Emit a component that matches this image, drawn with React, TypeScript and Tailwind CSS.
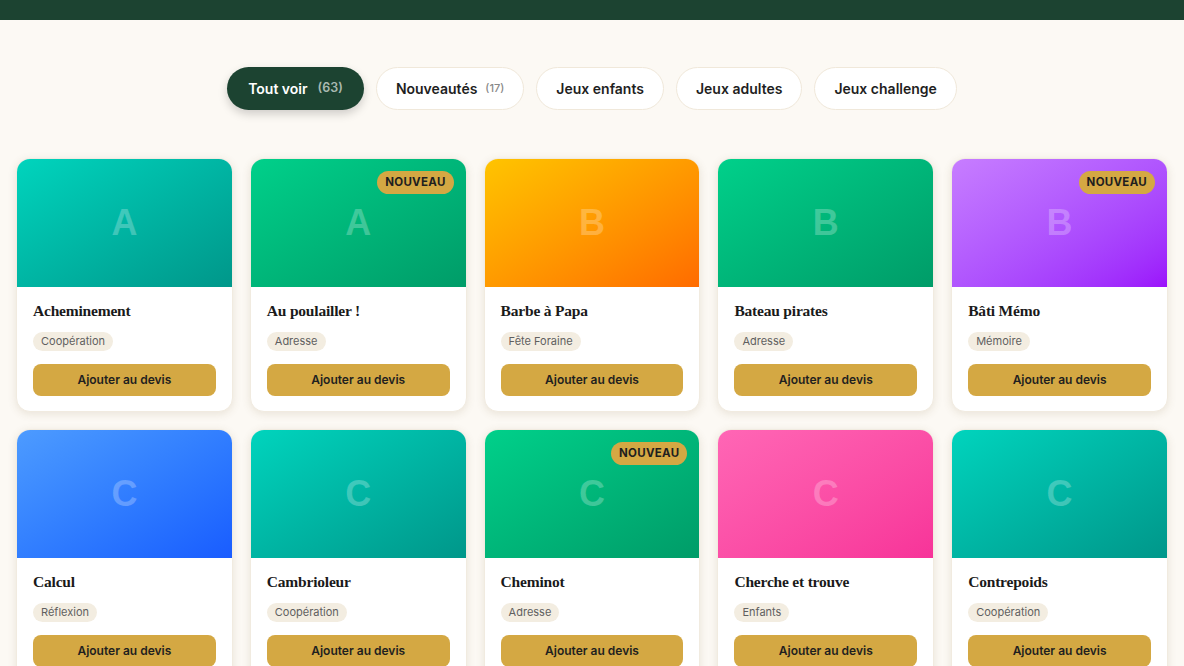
import React from 'react';

type Game = { name: string; tag: string; letter: string; grad: string; isNew?: boolean };

const games: Game[] = [
  { name: 'Acheminement', tag: 'Coopération', letter: 'A', grad: 'bg-gradient-to-br from-[#00d4bd] to-[#00978a]' },
  { name: 'Au poulailler !', tag: 'Adresse', letter: 'A', grad: 'bg-gradient-to-br from-[#00d08a] to-[#009c68]', isNew: true },
  { name: 'Barbe à Papa', tag: 'Fête Foraine', letter: 'B', grad: 'bg-gradient-to-br from-[#ffc400] to-[#ff6b00]' },
  { name: 'Bateau pirates', tag: 'Adresse', letter: 'B', grad: 'bg-gradient-to-br from-[#00d08a] to-[#009c68]' },
  { name: 'Bâti Mémo', tag: 'Mémoire', letter: 'B', grad: 'bg-gradient-to-br from-[#c77dff] to-[#9b10fb]', isNew: true },
  { name: 'Calcul', tag: 'Réflexion', letter: 'C', grad: 'bg-gradient-to-br from-[#4d9bff] to-[#1a5cff]' },
  { name: 'Cambrioleur', tag: 'Coopération', letter: 'C', grad: 'bg-gradient-to-br from-[#00d4bd] to-[#00978a]' },
  { name: 'Cheminot', tag: 'Adresse', letter: 'C', grad: 'bg-gradient-to-br from-[#00d08a] to-[#009c68]', isNew: true },
  { name: 'Cherche et trouve', tag: 'Enfants', letter: 'C', grad: 'bg-gradient-to-br from-[#ff66b5] to-[#f73399]' },
  { name: 'Contrepoids', tag: 'Coopération', letter: 'C', grad: 'bg-gradient-to-br from-[#00d4bd] to-[#00978a]' },
];

const filters = [
  { label: 'Tout voir', count: '63', active: true },
  { label: 'Nouveautés', count: '17' },
  { label: 'Jeux enfants' },
  { label: 'Jeux adultes' },
  { label: 'Jeux challenge' },
];

const sans = "font-['Inter','Noto_Sans',sans-serif]";

const GameCard = ({ game }: { game: Game }) => (
  <div className="bg-white rounded-[14px] overflow-hidden shadow-[0_2px_8px_rgba(120,100,60,0.14)] border border-[#f1ebe0]">
    <div className={`relative h-32 flex items-center justify-center ${game.grad}`}>
      <span className="text-[36px] font-bold text-white/25 font-['Liberation_Sans',Arial,sans-serif]">{game.letter}</span>
      {game.isNew && (
        <span className={`absolute top-[12px] right-3 bg-[#d4a843] text-[#1f1f1f] text-[11.5px] font-bold rounded-full px-[8px] h-[23px] flex items-center tracking-wide ${sans}`}>
          NOUVEAU
        </span>
      )}
    </div>
    <div className="px-4 pt-[15px] pb-[15px]">
      <h3 className="text-[15.5px] font-bold text-[#1a1a1a] leading-[18px] font-['Liberation_Serif',serif] tracking-[-0.2px]">
        {game.name}
      </h3>
      <div className="mt-[12px] flex">
        <span className={`bg-[#f3ede1] text-[#5f5f5f] text-[11px] rounded-full px-2 leading-[19px] ${sans}`}>
          {game.tag}
        </span>
      </div>
      <button className={`mt-[13px] w-full h-8 rounded-lg bg-[#d4a843] text-[#1f1f1f] text-[12px] font-semibold ${sans}`}>
        Ajouter au devis
      </button>
    </div>
  </div>
);

export default function App() {
  return (
    <div className={`min-h-screen bg-[#fcf9f4] ${sans}`}>
      <div className="h-5 bg-[#1c4331]" />
      <div className="flex justify-center gap-3 pt-[47px]">
        {filters.map((f) => (
          <button
            key={f.label}
            className={
              f.active
                ? 'h-[43px] px-[21px] rounded-full bg-[#1c4331] text-white text-[14px] font-semibold flex items-center gap-[10px] shadow-[0_4px_10px_rgba(0,0,0,0.18)]'
                : 'h-[43px] px-[19px] rounded-full bg-white border border-[#f0e8da] text-[#1f1f1f] text-[14px] font-semibold flex items-center gap-2'
            }
          >
            {f.label}
            {f.count && (
              <span className={f.active ? 'text-[12.5px] text-[#a9b9b0] font-semibold' : 'text-[11px] text-[#888] font-medium'}>
                ({f.count})
              </span>
            )}
          </button>
        ))}
      </div>
      <div className="grid grid-cols-5 gap-x-[17px] gap-y-[17px] px-[16px] pt-[48px] pb-8">
        {games.map((g) => (
          <GameCard key={g.name} game={g} />
        ))}
      </div>
    </div>
  );
}
